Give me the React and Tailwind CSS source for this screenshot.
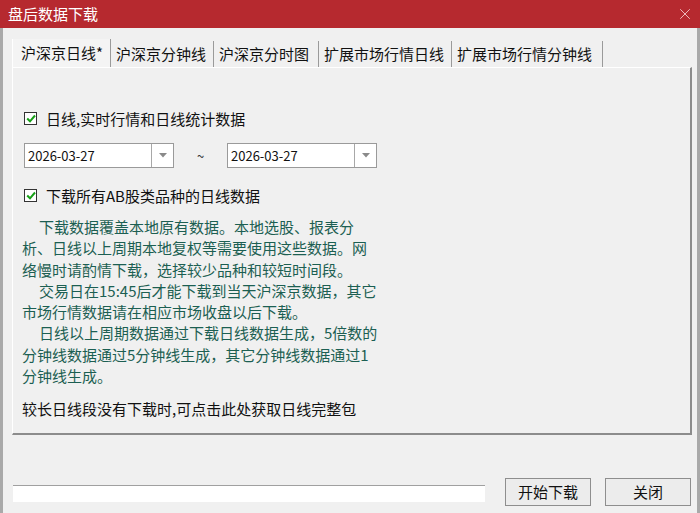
import { X } from "lucide-react";

const font = { fontFamily: '"Noto Sans CJK SC", "Microsoft YaHei", sans-serif' };

const tabs = [
  { label: "沪深京日线*", w: "w-[99px]", pl: "pl-[8px]", active: true },
  { label: "沪深京分钟线", w: "w-[103px]", pl: "pl-[5px]" },
  { label: "沪深京分时图", w: "w-[105px]", pl: "pl-[5px]" },
  { label: "扩展市场行情日线", w: "w-[133px]", pl: "pl-[5px]" },
  { label: "扩展市场行情分钟线", w: "w-[151px]", pl: "pl-[5px]" },
];

function Check({ label }) {
  return (
    <div className="flex items-center h-[18px]">
      <div className="w-[13px] h-[13px] border border-[#333] bg-white flex items-center justify-center">
        <svg width="10" height="9" viewBox="0 0 10 9">
          <path d="M1.2 4.5 L4 7.3 L9 1.5" fill="none" stroke="#17a017" strokeWidth="2" />
        </svg>
      </div>
      <span className="ml-[9px] text-[15px] text-[#111] leading-none">{label}</span>
    </div>
  );
}

function DateBox({ value }) {
  return (
    <div className="w-[150px] h-[25px] border border-[#9a9a9a] bg-white flex">
      <div className="flex-1 flex items-center pl-[3px] text-[13px] text-[#111]">{value}</div>
      <div className="w-[22px] border-l border-[#a8a8a8] flex items-center justify-center">
        <svg width="8" height="5" viewBox="0 0 8 5">
          <path d="M0 0 H8 L4 4.5 Z" fill="#8a8a8a" />
        </svg>
      </div>
    </div>
  );
}

export default function App() {
  return (
    <div className="w-[700px] h-[513px] flex flex-col bg-[#f0f0f0] select-none" style={font}>
      <div className="h-[28px] bg-[#b6292f] flex items-center justify-between pl-[8px] pr-[6px]">
        <span className="text-white text-[15px]">盘后数据下载</span>
        <X className="w-[18px] h-[18px] text-[#f3c9cb]" strokeWidth={1.2} />
      </div>

      <div className="flex-1 flex flex-col border-l-[3px] border-r-[3px] border-[#a9a9a9] pl-[9px] pr-[5px]">
        <div className="flex mt-[13px] h-[26px]">
          {tabs.map((t) => (
            <div
              key={t.label}
              className={`${t.w} ${t.pl} flex items-center text-[15px] text-[#111] border-r border-[#9a9a9a] ${
                t.active ? "bg-[#f4f4f4] border-l border-l-white -mt-[2px]" : ""
              }`}
            >
              {t.label}
            </div>
          ))}
        </div>

        <div className="h-[368px] border-t border-l border-white border-r-2 border-b-2 border-r-[#8c8c8c] border-b-[#8c8c8c] pl-[11px] pt-[41px]">
          <Check label="日线,实时行情和日线统计数据" />

          <div className="flex items-center mt-[16px]">
            <DateBox value="2026-03-27" />
            <span className="w-[53px] text-center text-[13px] text-[#333]">~</span>
            <DateBox value="2026-03-27" />
          </div>

          <div className="mt-[18px]">
            <Check label="下载所有AB股类品种的日线数据" />
          </div>

          <div className="mt-[12px] -ml-[2px] text-[15px] leading-[21.3px] text-[#1c5f52]">
            <div className="pl-[17px]">下载数据覆盖本地原有数据。本地选股、报表分</div>
            <div>析、日线以上周期本地复权等需要使用这些数据。网</div>
            <div>络慢时请酌情下载，选择较少品种和较短时间段。</div>
            <div className="pl-[17px]">交易日在15:45后才能下载到当天沪深京数据，其它</div>
            <div>市场行情数据请在相应市场收盘以后下载。</div>
            <div className="pl-[17px]">日线以上周期数据通过下载日线数据生成，5倍数的</div>
            <div>分钟线数据通过5分钟线生成，其它分钟线数据通过1</div>
            <div>分钟线生成。</div>
          </div>

          <div className="mt-[12px] -ml-[2px] text-[15px] leading-[21px] text-[#111]">
            较长日线段没有下载时,可点击此处获取日线完整包
          </div>
        </div>

        <div className="flex items-end mt-[43px]">
          <div className="w-[472px] h-[17px] bg-white border-t border-[#a0a0a0] mb-[10px] ml-px"></div>
          <button className="ml-[20px] w-[86px] h-[28px] border border-[#8e8e8e] bg-[#ececec] text-[15px] text-[#111] mb-[6px]">
            开始下载
          </button>
          <button className="ml-[14px] w-[86px] h-[28px] border border-[#8e8e8e] bg-[#ececec] text-[15px] text-[#111] mb-[6px]">
            关闭
          </button>
        </div>
      </div>
    </div>
  );
}
